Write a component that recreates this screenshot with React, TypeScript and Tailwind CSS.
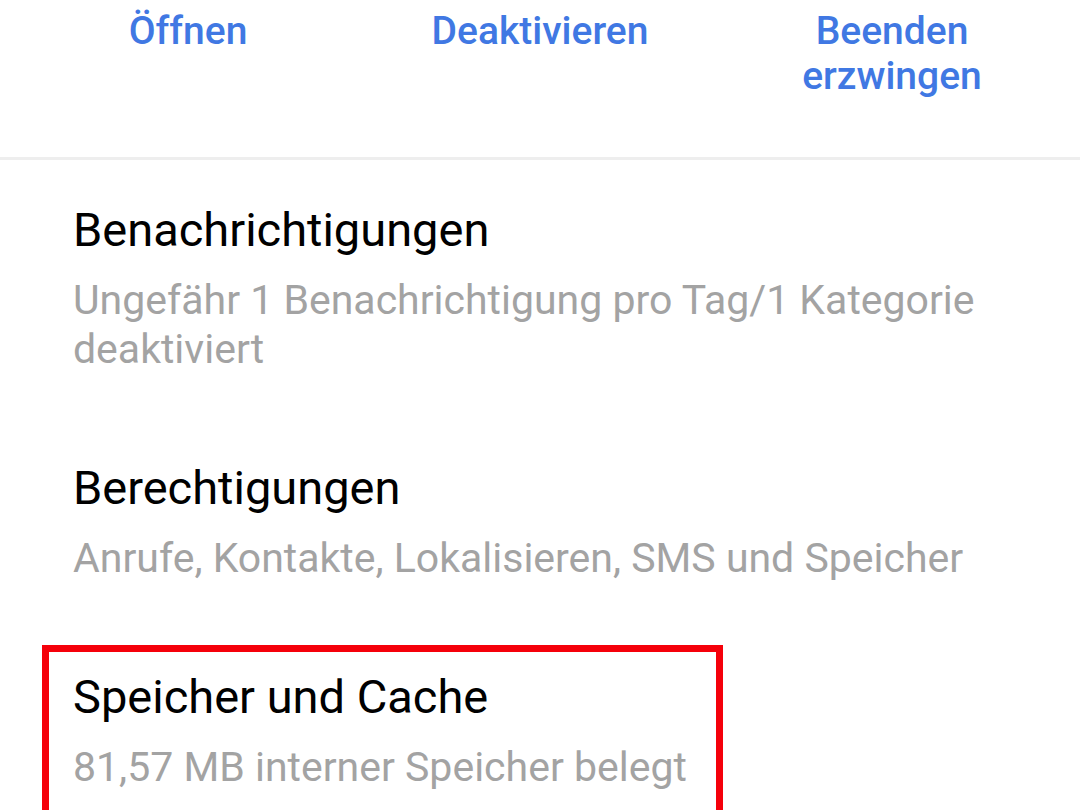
import React from "react";

const font = { fontFamily: "Roboto, 'Noto Sans', sans-serif" };

type Entry = { title: string; summary: string; marked?: boolean };

const entries: Entry[] = [
  {
    title: "Benachrichtigungen",
    summary: "Ungefähr 1 Benachrichtigung pro Tag/1 Kategorie deaktiviert",
  },
  {
    title: "Berechtigungen",
    summary: "Anrufe, Kontakte, Lokalisieren, SMS und Speicher",
  },
  {
    title: "Speicher und Cache",
    summary: "81,57 MB interner Speicher belegt",
    marked: true,
  },
];

function ActionButton({ label }: { label: string }) {
  return (
    <button className="flex justify-center px-12 text-center text-[39px] font-medium leading-[45px] text-[#4078e3]">
      {label}
    </button>
  );
}

function SettingRow({ entry }: { entry: Entry }) {
  return (
    <div className="relative pt-[42px] pb-[44px] pl-[73px] pr-[60px]">
      {entry.marked && (
        <div className="pointer-events-none absolute left-[42px] top-[18px] h-[400px] w-[681px] border-[7px] border-[#f5000a]" />
      )}
      <div className="text-[47px] leading-[56px] text-black">{entry.title}</div>
      <div className="mt-[18px] text-[41px] leading-[49px] text-[#a3a3a3]">
        {entry.summary}
      </div>
    </div>
  );
}

export default function App() {
  return (
    <div
      className="h-[810px] w-[1080px] overflow-hidden bg-white"
      style={font}
    >
      <div className="grid h-[157px] grid-cols-3 px-3 pt-[9px]">
        <ActionButton label="Öffnen" />
        <ActionButton label="Deaktivieren" />
        <ActionButton label="Beenden erzwingen" />
      </div>
      <div className="h-[3px] bg-[#eeeeee]" />
      {entries.map((e) => (
        <SettingRow key={e.title} entry={e} />
      ))}
    </div>
  );
}
